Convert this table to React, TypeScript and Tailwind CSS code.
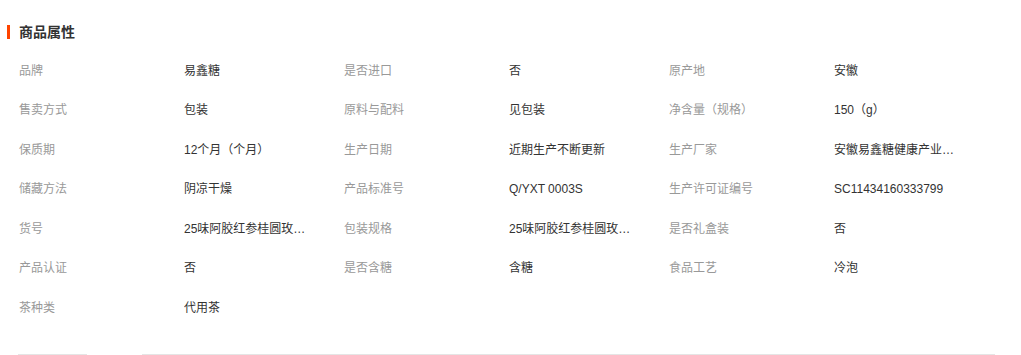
const rows: [string, string][][] = [
  [["品牌", "易鑫糖"], ["是否进口", "否"], ["原产地", "安徽"]],
  [["售卖方式", "包装"], ["原料与配料", "见包装"], ["净含量（规格）", "150（g）"]],
  [["保质期", "12个月（个月）"], ["生产日期", "近期生产不断更新"], ["生产厂家", "安徽易鑫糖健康产业有限公司"]],
  [["储藏方法", "阴凉干燥"], ["产品标准号", "Q/YXT 0003S"], ["生产许可证编号", "SC11434160333799"]],
  [["货号", "25味阿胶红参桂圆玫瑰茶"], ["包装规格", "25味阿胶红参桂圆玫瑰茶"], ["是否礼盒装", "否"]],
  [["产品认证", "否"], ["是否含糖", "含糖"], ["食品工艺", "冷泡"]],
  [["茶种类", "代用茶"]],
];

export default function App() {
  return (
    <div
      className="w-[1021px] h-[355px] bg-white overflow-hidden text-[12px]"
      style={{ fontFamily: '"Liberation Sans", "Noto Sans CJK SC", sans-serif' }}
    >
      <div className="flex items-center h-[20px] mt-[22px] pl-[7px] gap-[9px]">
        <span className="w-[3px] h-[14px] bg-[#ff4400]" />
        <h2 className="text-[14px] font-bold text-[#333] leading-[20px]">商品属性</h2>
      </div>

      <div className="pl-[19px] mt-[9px]">
        {rows.map((row, i) => (
          <div key={i} className="flex h-[39.5px] items-center">
            {row.map(([label, value]) => (
              <div key={label} className="flex w-[325px] shrink-0">
                <div className="w-[165px] shrink-0 text-[#999]">{label}</div>
                <div className="w-[130px] truncate text-[#333]">{value}</div>
              </div>
            ))}
          </div>
        ))}
      </div>

      <div className="flex mt-[26px]">
        <div className="ml-[18px] w-[69px] border-b border-[#e5e5e5]" />
        <div className="ml-[55px] w-[853px] border-b border-[#e5e5e5]" />
      </div>
    </div>
  );
}
